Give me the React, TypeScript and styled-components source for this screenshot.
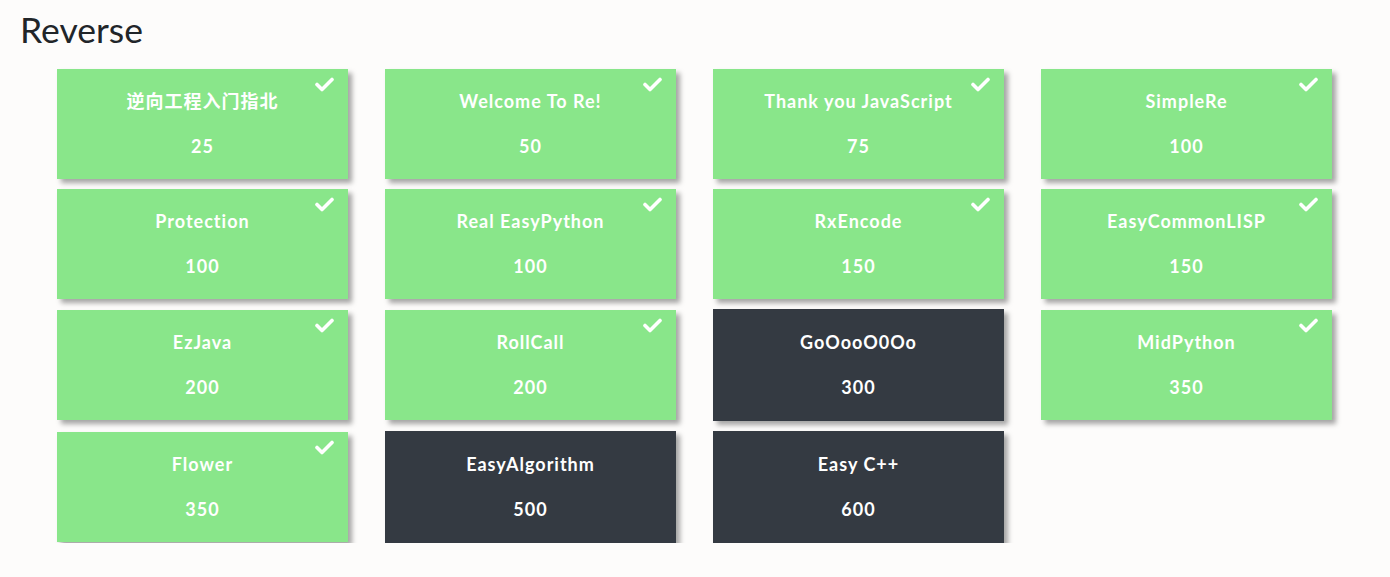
import React from "react";
import styled, { createGlobalStyle } from "styled-components";

const GlobalStyle = createGlobalStyle`
  html, body { margin: 0; padding: 0; background: #fdfcfb; }
  body { font-family: Lato, "Noto Sans CJK SC", sans-serif; }
`;

const Page = styled.div`
  padding: 10px 0 0 20px;
`;

const Title = styled.h1`
  margin: 0 0 19px 0;
  font-family: Lato, sans-serif;
  font-weight: 400;
  font-size: 35.5px;
  line-height: 40px;
  color: #212529;
`;

const Grid = styled.div`
  display: grid;
  grid-template-columns: repeat(4, 291px);
  column-gap: 37px;
  row-gap: 10px;
  align-items: center;
  margin-left: 37px;
`;

const Card = styled.div<{ $solved: boolean }>`
  position: relative;
  box-sizing: border-box;
  height: ${(p) => (p.$solved ? "110px" : "112px")};
  background: ${(p) => (p.$solved ? "#89e68a" : "#343a42")};
  box-shadow: 4px 4px 5px rgba(0, 0, 0, 0.35);
  display: flex;
  flex-direction: column;
  align-items: center;
  padding-top: ${(p) => (p.$solved ? "20px" : "21px")};
  color: #ffffff;
  font-family: Lato, "Noto Sans CJK SC", sans-serif;
  font-weight: 700;
  font-size: 18px;
  letter-spacing: 1px;
`;

const Name = styled.div`
  line-height: 24px;
  height: 24px;
`;

const Points = styled.div`
  line-height: 24px;
  margin-top: 21px;
`;

const Check = styled.svg`
  position: absolute;
  top: 8px;
  right: 14px;
  width: 19px;
  height: 15px;
`;

const CheckIcon = () => (
  <Check viewBox="0 0 19 15">
    <path d="M2 7.5 L7 12.5 L17 2.5" fill="none" stroke="#ffffff" strokeWidth="3.6" strokeLinecap="round" strokeLinejoin="round" />
  </Check>
);

const challenges = [
  { name: "逆向工程入门指北", pts: 25, solved: true },
  { name: "Welcome To Re!", pts: 50, solved: true },
  { name: "Thank you JavaScript", pts: 75, solved: true },
  { name: "SimpleRe", pts: 100, solved: true },
  { name: "Protection", pts: 100, solved: true },
  { name: "Real EasyPython", pts: 100, solved: true },
  { name: "RxEncode", pts: 150, solved: true },
  { name: "EasyCommonLISP", pts: 150, solved: true },
  { name: "EzJava", pts: 200, solved: true },
  { name: "RollCall", pts: 200, solved: true },
  { name: "GoOooO0Oo", pts: 300, solved: false },
  { name: "MidPython", pts: 350, solved: true },
  { name: "Flower", pts: 350, solved: true },
  { name: "EasyAlgorithm", pts: 500, solved: false },
  { name: "Easy C++", pts: 600, solved: false },
];

export default function App() {
  return (
    <>
      <GlobalStyle />
      <Page>
        <Title>Reverse</Title>
        <Grid>
          {challenges.map((c) => (
            <Card key={c.name} $solved={c.solved}>
              {c.solved && <CheckIcon />}
              <Name>{c.name}</Name>
              <Points>{c.pts}</Points>
            </Card>
          ))}
        </Grid>
      </Page>
    </>
  );
}
